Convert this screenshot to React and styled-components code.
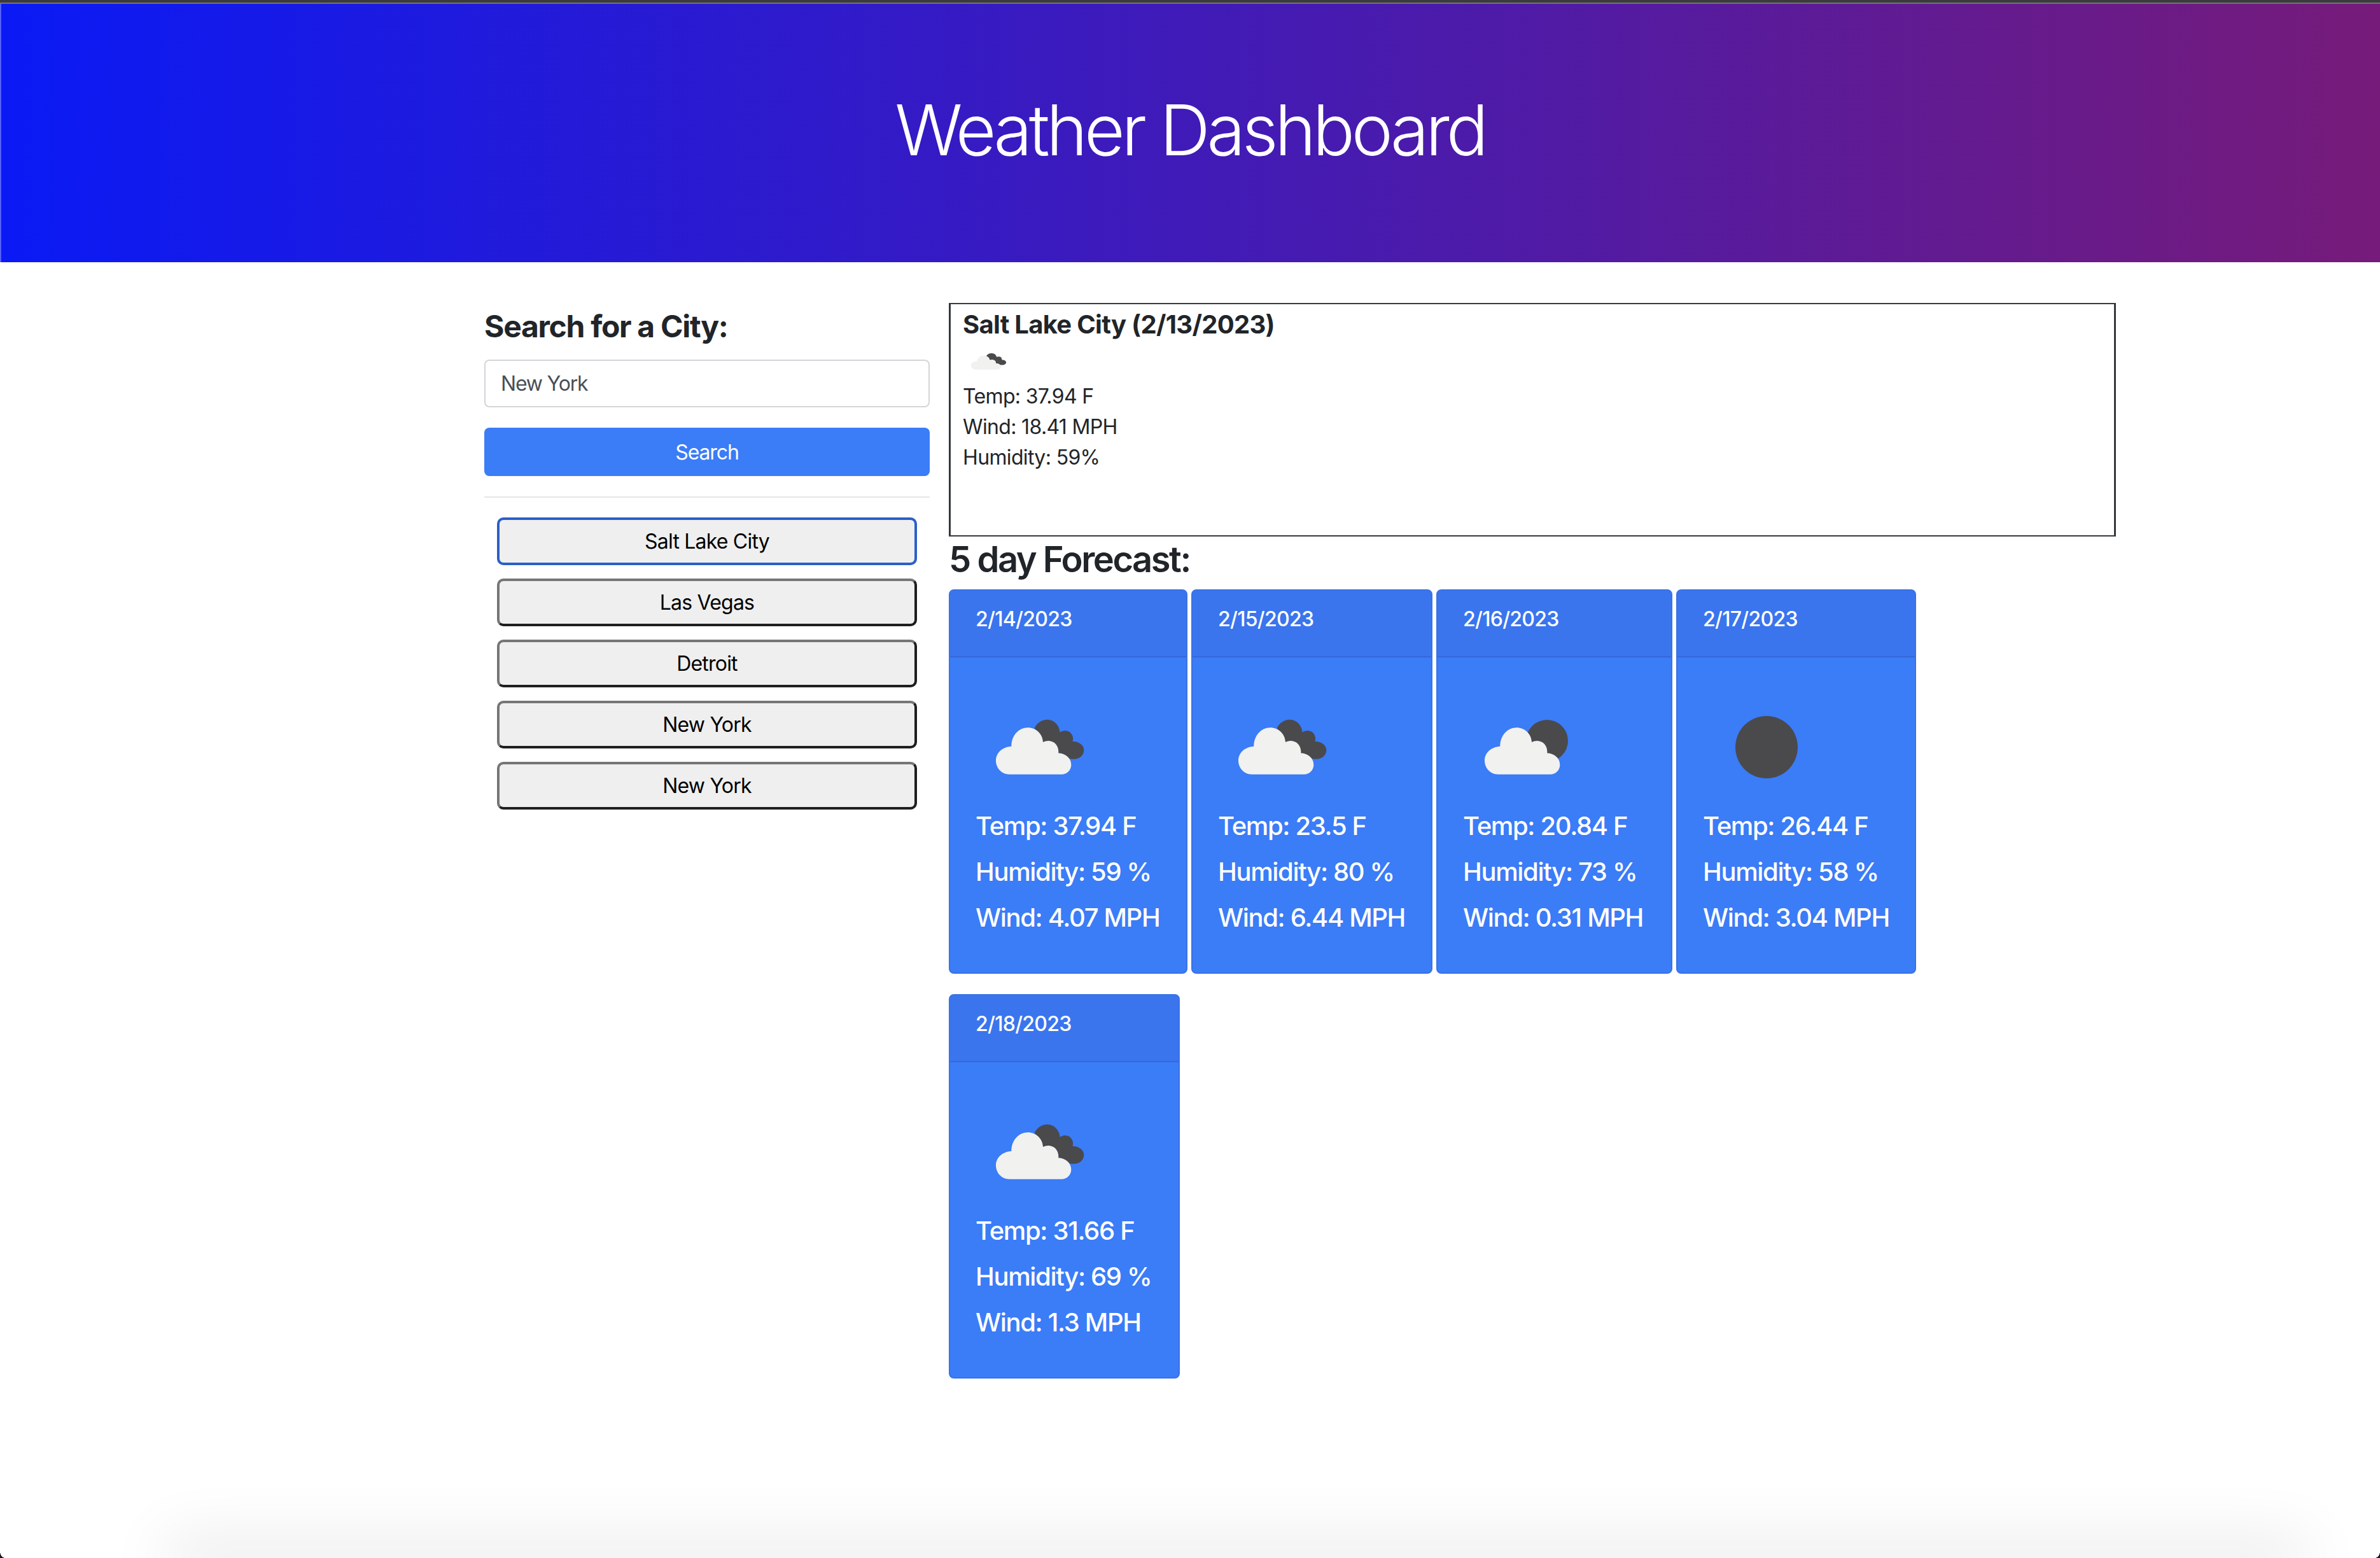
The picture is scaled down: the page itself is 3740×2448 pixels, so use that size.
import React from "react";
import styled, { createGlobalStyle } from "styled-components";

const cities = ["Salt Lake City", "Las Vegas", "Detroit", "New York", "New York"];

const days = [
  { date: "2/14/2023", temp: "37.94", humidity: 59, wind: "4.07", icon: "clouds", width: 375 },
  { date: "2/15/2023", temp: "23.5", humidity: 80, wind: "6.44", icon: "clouds", width: 379 },
  { date: "2/16/2023", temp: "20.84", humidity: 73, wind: "0.31", icon: "few", width: 371 },
  { date: "2/17/2023", temp: "26.44", humidity: 58, wind: "3.04", icon: "clear", width: 377 },
  { date: "2/18/2023", temp: "31.66", humidity: 69, wind: "1.3", icon: "clouds", width: 363 },
];

const GlobalStyle = createGlobalStyle`
  html, body {
    margin: 0;
    background: #fff;
  }
  body {
    font-family: Inter, "Liberation Sans", sans-serif;
    color: #212529;
  }
  * {
    box-sizing: border-box;
  }
`;

const Page = styled.div`
  position: relative;
  width: 3740px;
  height: 2448px;
  overflow: hidden;
`;

const Header = styled.header`
  height: 412px;
  display: flex;
  justify-content: center;
  padding-top: 135px;
  background: linear-gradient(to right, #0a1af5, #761b7a);
  border-top: 4px solid #3b3b3f;
  box-shadow: inset 0 2px 0 #737373, inset 2px 0 0 rgba(255, 255, 255, 0.3);
`;

const Title = styled.h1`
  margin: 0;
  font-size: 110px;
  line-height: 130px;
  font-weight: 300;
  letter-spacing: -5.2px;
  color: #fff;
`;

const Content = styled.main`
  display: grid;
  grid-template-columns: 700px 1834px;
  column-gap: 30px;
  padding: 64px 0 0 761px;
`;

const Sidebar = styled.aside`
  display: flex;
  flex-direction: column;
`;

const SideHeading = styled.h4`
  margin: 8px 0 23px;
  font-size: 48px;
  line-height: 58px;
  font-weight: 700;
  letter-spacing: -1.3px;
`;

const CityInput = styled.input`
  height: 75px;
  padding: 0 24px;
  border: 2px solid #d3d5d8;
  border-radius: 8px;
  font: 32px Inter, sans-serif;
  letter-spacing: -1.2px;
  color: #495057;
  outline: none;
`;

const SearchButton = styled.button`
  height: 76px;
  margin-top: 32px;
  border: none;
  border-radius: 8px;
  background: #3b7cf7;
  color: #fff;
  font: 32px Inter, sans-serif;
  letter-spacing: -1.1px;
`;

const Divider = styled.hr`
  width: 100%;
  height: 2px;
  margin: 32px 0 31px;
  border: none;
  background: #e4e5e6;
`;

const History = styled.div`
  display: flex;
  flex-direction: column;
  gap: 21px;
  padding: 0 20px;
`;

const CityButton = styled.button`
  height: 75px;
  border: 4px solid;
  border-color: ${p => (p.$active ? "#2b5fc7" : "#767676 #1f1f1f #1f1f1f #767676")};
  border-radius: 10px;
  background: #efefef;
  color: #000;
  font: 32px Inter, sans-serif;
  letter-spacing: -0.8px;
`;

const Results = styled.section`
  min-width: 0;
`;

const CurrentBox = styled.div`
  height: 367px;
  padding: 8px 19px;
  border: solid #343a40;
  border-width: 2px 3px;
`;

const CurrentTitle = styled.h5`
  margin: 0 0 4px;
  font-size: 40px;
  line-height: 48px;
  font-weight: 700;
  letter-spacing: -0.72px;
`;

const CurrentIcon = styled.svg`
  display: block;
  width: 80px;
  height: 60px;
  margin-bottom: 1px;
`;

const CurrentLine = styled.p`
  margin: 0;
  font-size: 32px;
  line-height: 48px;
  letter-spacing: -0.65px;
`;

const ForecastHeading = styled.h3`
  margin: 2px 0 0;
  font-size: 56px;
  line-height: 68px;
  font-weight: 600;
  letter-spacing: -2.45px;
`;

const CardRow = styled.div`
  display: flex;
  flex-wrap: wrap;
  gap: 32px 6px;
  margin-top: 13px;
`;

const Card = styled.article`
  width: ${p => p.$width}px;
  height: 604px;
  border: 2px solid #3a72e6;
  border-radius: 8px;
  overflow: hidden;
  background: #3b7cf7;
  color: #fff;
`;

const CardDate = styled.div`
  height: 105px;
  padding: 21px 40px 0;
  background: #3a75ee;
  border-bottom: 2px solid #3468d6;
  font-size: 32px;
  line-height: 48px;
  font-weight: 500;
  letter-spacing: -0.7px;
`;

const CardBody = styled.div`
  padding: 41px 40px 0;
`;

const CardIcon = styled.svg`
  display: block;
  width: 200px;
  height: 200px;
`;

const CardLine = styled.p`
  margin: 0 0 24px;
  font-size: 40px;
  line-height: 48px;
  font-weight: 500;
  letter-spacing: -1.35px;
  white-space: nowrap;
`;

const WindowShadow = styled.div`
  position: absolute;
  left: 260px;
  right: 115px;
  bottom: -40px;
  height: 40px;
  box-shadow: 0 -20px 100px rgba(0, 0, 0, 0.14);
`;

// the rounded corners of the captured window
const WindowCorner = styled.div`
  position: absolute;
  bottom: 0;
  ${p => p.$side}: 0;
  width: 8px;
  height: 10px;
  background: radial-gradient(
    ellipse 8px 10px at ${p => (p.$side === "left" ? "100% 0" : "0 0")},
    transparent 96%,
    #1c1726 100%
  );
`;

const WHITE = "#f1f1f0";
const DARK = "#4a4a4d";

const cloudPath =
  "M258 380C222 380 195 350 195 315C195 280 225 250 268 248C268 195 305 160 345 160C385 160 415 190 417 228C430 222 445 220 455 224C480 230 492 255 490 280C525 282 550 305 550 335C550 360 530 380 505 380Z";
const backCloudPath =
  "M378 160C390 135 415 122 437 122C470 122 495 150 497 182C510 172 530 170 545 182C558 195 562 212 556 224C590 225 610 245 610 265C610 290 590 308 565 308L400 300Z";

// drawn in the 200x200 box of the weather image
const IconShapes = ({ type }) => {
  if (type === "clear") return <circle cx="100" cy="100" r="49" fill={DARK} />;
  return (
    <>
      {type === "few" && <circle cx="132" cy="90" r="33" fill={DARK} />}
      <g transform={type === "few" ? "translate(-31 16) scale(.3333)" : "translate(-33 16) scale(.3333)"}>
        {type === "clouds" && <path d={backCloudPath} fill={DARK} />}
        <path d={cloudPath} fill={WHITE} />
      </g>
    </>
  );
};

const App = () => (
  <Page>
    <GlobalStyle />
    <Header>
      <Title>Weather Dashboard</Title>
    </Header>
    <Content>
      <Sidebar>
        <SideHeading>Search for a City:</SideHeading>
        <CityInput defaultValue="New York" />
        <SearchButton>Search</SearchButton>
        <Divider />
        <History>
          {cities.map((city, i) => (
            <CityButton key={i} $active={i === 0}>
              {city}
            </CityButton>
          ))}
        </History>
      </Sidebar>
      <Results>
        <CurrentBox>
          <CurrentTitle>Salt Lake City (2/13/2023)</CurrentTitle>
          <CurrentIcon viewBox="0 0 200 200" preserveAspectRatio="none">
            <IconShapes type="clouds" />
          </CurrentIcon>
          <CurrentLine>Temp: 37.94 F</CurrentLine>
          <CurrentLine>Wind: 18.41 MPH</CurrentLine>
          <CurrentLine>Humidity: 59%</CurrentLine>
        </CurrentBox>
        <ForecastHeading>5 day Forecast:</ForecastHeading>
        <CardRow>
          {days.map(day => (
            <Card key={day.date} $width={day.width}>
              <CardDate>{day.date}</CardDate>
              <CardBody>
                <CardIcon viewBox="0 0 200 200">
                  <IconShapes type={day.icon} />
                </CardIcon>
                <CardLine>Temp: {day.temp} F</CardLine>
                <CardLine>Humidity: {day.humidity} %</CardLine>
                <CardLine>Wind: {day.wind} MPH</CardLine>
              </CardBody>
            </Card>
          ))}
        </CardRow>
      </Results>
    </Content>
    <WindowShadow />
    <WindowCorner $side="left" />
    <WindowCorner $side="right" />
  </Page>
);

export default App;
